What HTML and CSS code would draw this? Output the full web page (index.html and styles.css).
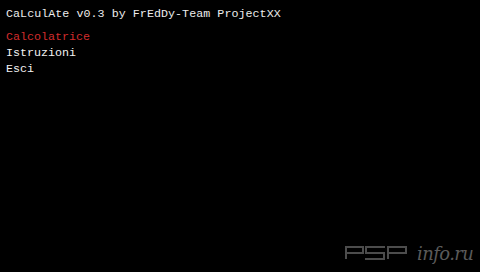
FILE: index.html
```html
<!DOCTYPE html>
<html>
<head>
<meta charset="utf-8">
<link rel="stylesheet" href="styles.css">
</head>
<body>
<div class="screen">
  <div class="title">CaLculAte v0.3 by FrEdDy-Team ProjectXX</div>
  <ul class="menu">
    <li class="item active">Calcolatrice</li>
    <li class="item">Istruzioni</li>
    <li class="item">Esci</li>
  </ul>
  <div class="watermark">
    <svg class="psp" width="64" height="14" viewBox="0 0 64 14">
      <g fill="none" stroke="#4c4c4c" stroke-width="2">
        <path d="M1 13 V1 H18 V7 H2"/>
        <path d="M40 1 H21 V7 H39 V13 H20"/>
        <path d="M43 13 V1 H61 V7 H44"/>
      </g>
    </svg>
    <span class="site">info.ru</span>
  </div>
</div>
</body>
</html>
```
FILE: styles.css
```css
html, body {
  margin: 0;
  padding: 0;
  background: #000;
}
.screen {
  position: relative;
  width: 480px;
  height: 272px;
  background: #000;
  font-family: "Liberation Mono", "DejaVu Sans Mono", monospace;
  font-size: 11.67px;
  line-height: 16px;
  color: #ececec;
  overflow: hidden;
}
.title {
  padding: 6px 0 0 6px;
  white-space: pre;
  letter-spacing: 0.05px;
}
.menu {
  list-style: none;
  margin: 7px 0 0 0;
  padding: 0 0 0 6px;
}
.item {
  height: 16px;
  color: #f2f2f2;
}
.item.active {
  color: #d22c2c;
}
.watermark {
  position: absolute;
  left: 345px;
  top: 246px;
  display: flex;
  align-items: flex-end;
  gap: 8px;
}
.psp {
  display: block;
  margin-bottom: 2px;
}
.site {
  font-family: "DejaVu Serif", "Liberation Serif", serif;
  font-style: italic;
  font-size: 18px;
  line-height: 16px;
  color: #5a5a5a;
  letter-spacing: -0.6px;
}
```
